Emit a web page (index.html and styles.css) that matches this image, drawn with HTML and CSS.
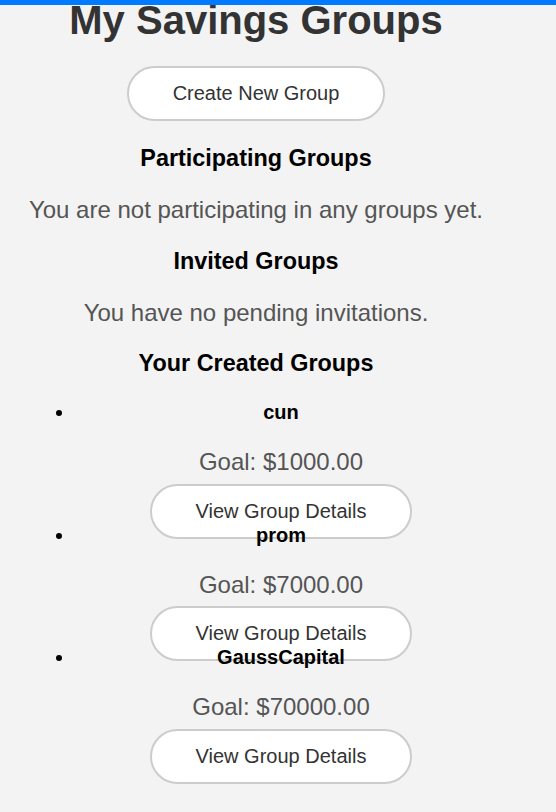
FILE: index.html
```html
<!DOCTYPE html>
<html lang="en">
<head>
<meta charset="utf-8">
<title>My Savings Groups</title>
<link rel="stylesheet" href="styles.css">
</head>
<body>
<div class="topbar"></div>
<main class="page">
  <h1 class="title">My Savings Groups</h1>
  <div class="actions">
    <button class="pill">Create New Group</button>
  </div>

  <h3 class="section">Participating Groups</h3>
  <p class="empty">You are not participating in any groups yet.</p>

  <h3 class="section">Invited Groups</h3>
  <p class="empty">You have no pending invitations.</p>

  <h3 class="section">Your Created Groups</h3>
  <ul class="groups">
    <li class="group">
      <h4 class="group-name">cun</h4>
      <p class="goal">Goal: $1000.00</p>
      <button class="pill">View Group Details</button>
    </li>
    <li class="group">
      <h4 class="group-name">prom</h4>
      <p class="goal">Goal: $7000.00</p>
      <button class="pill">View Group Details</button>
    </li>
    <li class="group">
      <h4 class="group-name">GaussCapital</h4>
      <p class="goal">Goal: $70000.00</p>
      <button class="pill">View Group Details</button>
    </li>
  </ul>
</main>
</body>
</html>
```

FILE: styles.css
```css
html, body {
  margin: 0;
  padding: 0;
}

body {
  background: #f3f3f3;
  font-family: "Liberation Sans", Arial, sans-serif;
  color: #333;
}

.topbar {
  position: fixed;
  top: 0;
  left: 0;
  right: 0;
  height: 5px;
  background: #007bff;
  z-index: 10;
}

.page {
  width: 462px;
  padding: 0 25px 60px;
  text-align: center;
}

.title {
  margin: -3px 0 0;
  font-size: 40px;
  line-height: 46px;
  font-weight: bold;
  color: #333;
}

.actions {
  margin-top: 23px;
}

.pill {
  font-family: "Liberation Sans", Arial, sans-serif;
  font-size: 20px;
  line-height: 23px;
  color: #333;
  background: #fff;
  border: 2px solid #ccc;
  border-radius: 30px;
  padding: 14px 44px;
  cursor: pointer;
}

.section {
  font-size: 23.4px;
  font-weight: bold;
  color: #000;
  margin: 24px 0;
  line-height: 27px;
}

.empty {
  font-size: 24px;
  line-height: 27.6px;
  color: #555;
  margin: 24px 0;
}

.groups {
  margin: 23px 0 0;
  padding: 0 0 0 50px;
  text-align: center;
}

.group {
  height: 122.5px;
  font-size: 20px;
  color: #000;
}

.group-name {
  margin: 0;
  font-size: 20px;
  line-height: 23px;
  font-weight: bold;
  color: #000;
}

.goal {
  margin: 24px 0 8px;
  font-size: 24px;
  line-height: 27.6px;
  color: #555;
}
```
